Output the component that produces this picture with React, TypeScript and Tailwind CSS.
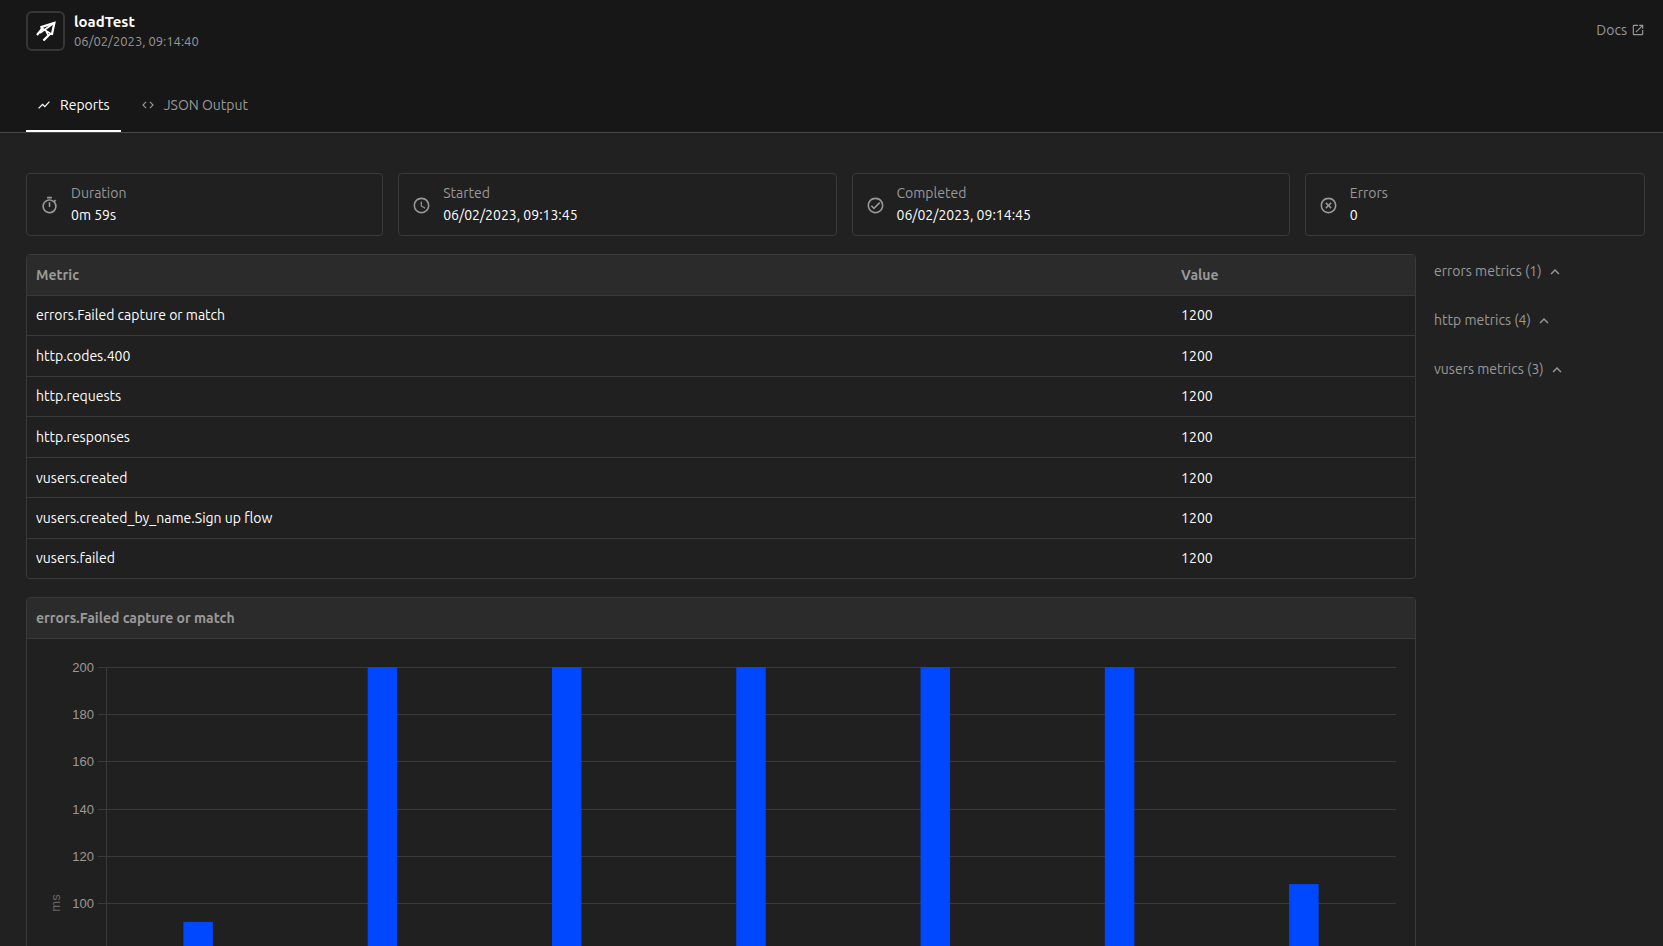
import { MdCode, MdHighlightOff, MdKeyboardArrowUp, MdOpenInNew, MdOutlineCheckCircle, MdOutlineTimer, MdSchedule, MdShowChart } from "react-icons/md";
import type { IconType } from "react-icons";

const stats: { label: string; value: string; icon: IconType }[] = [
  { label: "Duration", value: "0m 59s", icon: MdOutlineTimer },
  { label: "Started", value: "06/02/2023, 09:13:45", icon: MdSchedule },
  { label: "Completed", value: "06/02/2023, 09:14:45", icon: MdOutlineCheckCircle },
  { label: "Errors", value: "0", icon: MdHighlightOff },
];

const metrics = [
  "errors.Failed capture or match",
  "http.codes.400",
  "http.requests",
  "http.responses",
  "vusers.created",
  "vusers.created_by_name.Sign up flow",
  "vusers.failed",
];

const groups = ["errors metrics (1)", "http metrics (4)", "vusers metrics (3)"];

const samples = [92, 200, 200, 200, 200, 200, 108];

function Logo() {
  return (
    <svg viewBox="0 0 20 20" className="size-5" aria-hidden="true">
      <path d="M1 14 L7 6.8 M4.4 6.4 L18.4 1.8 L15.8 14 M14.4 12.4 L7.4 19.6" fill="none" stroke="white" strokeWidth="2.2" />
      <path d="M5 6.8 L16 13.4 M4 12 L18 2 M9.6 8.8 L12 14.2" fill="none" stroke="white" strokeWidth="1.6" />
    </svg>
  );
}

function BarChart({ values }: { values: number[] }) {
  const left = 79;
  const right = 1369;
  const top = 28;
  const height = 472;
  const slot = (right - left) / values.length;
  const barWidth = slot * 0.16;
  const ticks = [200, 180, 160, 140, 120, 100, 80, 60, 40, 20, 0];
  const yOf = (v: number) => top + height - (v / 200) * height;
  return (
    <svg viewBox="0 0 1388 530" className="block h-auto w-full" role="img" aria-label="errors.Failed capture or match">
      {ticks.map((t) => {
        const y = Math.round(yOf(t)) + 0.5;
        return (
          <g key={t}>
            <line x1={left - 8} x2={right} y1={y} y2={y} stroke="#3a3a3a" />
            <text x={left - 12} y={y + 4} textAnchor="end" fill="#999999" className="font-['Liberation_Sans',sans-serif] text-[13px]">
              {t}
            </text>
          </g>
        );
      })}
      <line x1={left + 0.5} x2={left + 0.5} y1={top} y2={top + height} stroke="#3a3a3a" />
      <text
        transform={`translate(33 ${top + height / 2}) rotate(-90)`}
        textAnchor="middle"
        fill="#666666"
        className="font-['Liberation_Sans',sans-serif] text-[13px]"
      >
        ms
      </text>
      {values.map((v, i) => (
        <rect key={i} x={left + slot * (i + 0.5) - barWidth / 2} y={yOf(v)} width={barWidth} height={(v / 200) * height} fill="#0048ff" />
      ))}
    </svg>
  );
}

export default function App() {
  return (
    <div className="h-screen overflow-y-auto bg-[#212121] font-['Ubuntu','Noto_Sans',sans-serif] text-sm leading-5 text-white [scrollbar-width:none]">
      <header className="border-b border-[#4a4a4a] bg-[#171717] pr-[18px] pl-[26px]">
        <div className="flex items-start justify-between pt-[11px]">
          <div className="flex items-center gap-[9px]">
            <div className="flex h-10 w-[39px] items-center justify-center rounded-md border-2 border-[#363636]">
              <Logo />
            </div>
            <div>
              <h1 className="pt-px text-[15px] leading-5 font-semibold">loadTest</h1>
              <p className="text-[13px] leading-[19px] text-[#999999]">06/02/2023, 09:14:40</p>
            </div>
          </div>
          <a href="#docs" className="flex items-center gap-1 pt-[9px] text-[#999999]">
            Docs
            <MdOpenInNew className="size-[14px]" />
          </a>
        </div>
        <nav className="mt-7 flex" role="tablist">
          <button role="tab" aria-selected="true" className="flex h-[53px] items-center gap-[9px] border-b-2 border-white px-[11px]">
            <MdShowChart className="size-[14px]" />
            Reports
          </button>
          <button role="tab" aria-selected="false" className="flex h-[53px] items-center gap-[9px] border-b-2 border-transparent px-5 text-[#999999]">
            <MdCode className="size-[14px]" />
            JSON Output
          </button>
        </nav>
      </header>

      <main className="pt-10 pr-[18px] pl-[26px]">
        <section className="grid grid-cols-[357fr_438fr_438fr_340fr] gap-[15px]">
          {stats.map(({ label, value, icon: Icon }) => (
            <div key={label} className="flex items-center gap-3 rounded border border-[#3a3a3a] bg-[#202020] px-[13px] pt-2 pb-[9px]">
              <Icon className="mt-[2px] size-[19px] text-[#999999]" />
              <div>
                <p className="leading-[22px] text-[#999999]">{label}</p>
                <p className="leading-[22px]">{value}</p>
              </div>
            </div>
          ))}
        </section>

        <div className="mt-[18px] grid grid-cols-[1fr_211px] gap-[18px]">
          <div className="flex min-w-0 flex-col gap-[18px]">
            <div className="overflow-hidden rounded border border-[#3a3a3a] bg-[#202020]">
              <table className="h-[323px] w-full table-fixed text-left">
                <thead className="bg-[#2b2b2b] text-[#999999]">
                  <tr className="border-b border-[#3a3a3a]">
                    <th className="h-10 px-[9px] font-semibold">Metric</th>
                    <th className="h-10 w-[17.5%] px-[9px] font-semibold">Value</th>
                  </tr>
                </thead>
                <tbody>
                  {metrics.map((name) => (
                    <tr key={name} className="border-b border-[#3a3a3a] last:border-b-0">
                      <td className="px-[9px]">{name}</td>
                      <td className="px-[9px]">1200</td>
                    </tr>
                  ))}
                </tbody>
              </table>
            </div>

            <section className="overflow-hidden rounded border border-[#3a3a3a] bg-[#202020]">
              <h2 className="border-b border-[#3a3a3a] bg-[#2b2b2b] px-[9px] py-[10px] font-semibold text-[#999999]">
                errors.Failed capture or match
              </h2>
              <BarChart values={samples} />
            </section>
          </div>

          <aside className="flex flex-col items-start gap-[29px] pt-[7px] text-[#999999]">
            {groups.map((g) => (
              <button key={g} className="flex items-center gap-1">
                {g}
                <MdKeyboardArrowUp className="mt-[2px] size-[18px]" />
              </button>
            ))}
          </aside>
        </div>
      </main>
    </div>
  );
}
